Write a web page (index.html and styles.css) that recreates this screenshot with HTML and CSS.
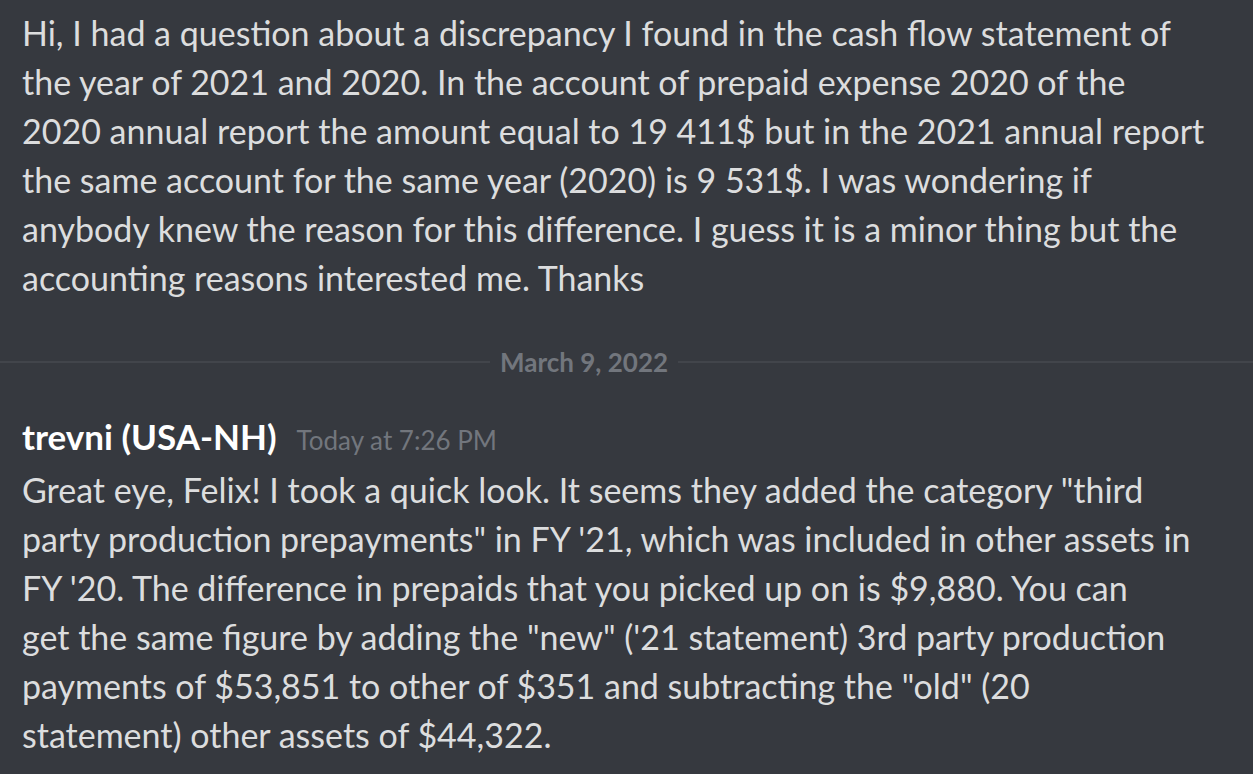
FILE: index.html
```html
<!DOCTYPE html>
<html>
<head>
<meta charset="utf-8">
<link rel="stylesheet" href="styles.css">
</head>
<body>
<div class="chat">
  <div class="message first">
    <div class="content">Hi, I had a question about a discrepancy I found in the cash flow statement of<br>the year of 2021 and 2020. In the account of prepaid expense 2020 of the<br>2020 annual report the amount equal to 19 411$ but in the 2021 annual report<br>the same account for the same year (2020) is 9 531$. I was wondering if<br>anybody knew the reason for this difference. I guess it is a minor thing but the<br>accounting reasons interested me. Thanks</div>
  </div>
  <div class="divider">
    <span class="line left"></span>
    <span class="date">March 9, 2022</span>
    <span class="line right"></span>
  </div>
  <div class="message">
    <div class="header"><span class="username">trevni (USA-NH)</span><span class="timestamp">Today at 7:26 PM</span></div>
    <div class="content">Great eye, Felix! I took a quick look. It seems they added the category "third<br>party production prepayments" in FY '21, which was included in other assets in<br>FY '20. The difference in prepaids that you picked up on is $9,880. You can<br>get the same figure by adding the "new" ('21 statement) 3rd party production<br>payments of $53,851 to other of $351 and subtracting the "old" (20<br>statement) other assets of $44,322.</div>
  </div>
</div>
</body>
</html>
```
FILE: styles.css
```css
html, body {
  margin: 0;
  padding: 0;
  background: #36393f;
  height: 100%;
  overflow: hidden;
}
.chat {
  font-family: "Lato", "Noto Sans", sans-serif;
  color: #dcddde;
  padding-top: 8px;
}
.message {
  padding-left: 22px;
}
.content {
  font-size: 34px;
  line-height: 49px;
  white-space: nowrap;
}
.divider {
  display: flex;
  align-items: center;
  height: 2px;
  margin-top: 59px;
  margin-bottom: 49px;
}
.line {
  height: 2px;
  background: #42454b;
}
.line.left {
  width: 490px;
}
.line.right {
  flex: 1;
}
.date {
  font-size: 26px;
  font-weight: 700;
  color: #72767d;
  padding: 0 10px;
  line-height: 30px;
}
.header {
  line-height: 49px;
  display: flex;
  align-items: baseline;
}
.username {
  font-size: 35px;
  font-weight: 700;
  color: #ffffff;
}
.timestamp {
  font-size: 26px;
  color: #72767d;
  margin-left: 20px;
}
```
